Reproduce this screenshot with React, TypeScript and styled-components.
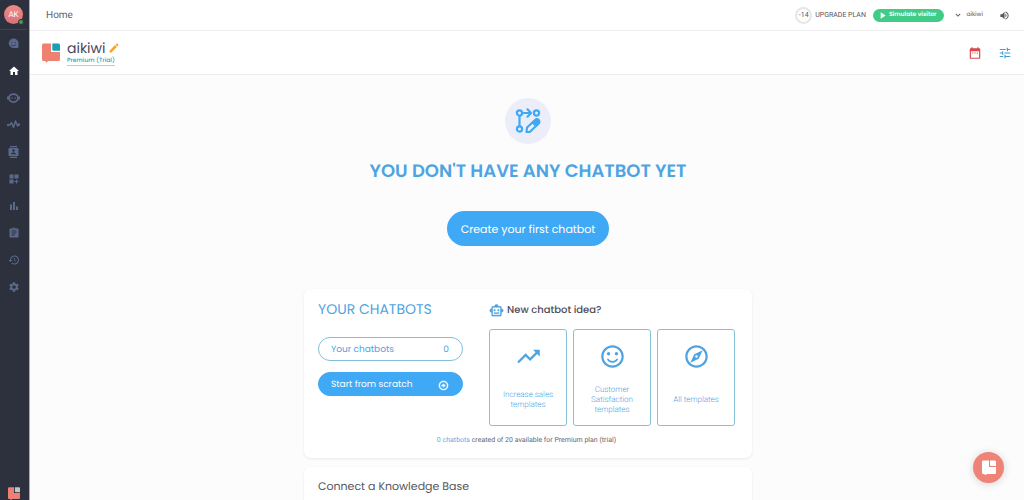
import React from "react";
import styled, { createGlobalStyle } from "styled-components";
import {
  MdAssignment,
  MdBarChart,
  MdDashboardCustomize,
  MdDateRange,
  MdEdit,
  MdHistory,
  MdHome,
  MdKeyboardArrowDown,
  MdOutlineArrowCircleRight,
  MdOutlineExplore,
  MdOutlineSentimentSatisfiedAlt,
  MdOutlineSmartToy,
  MdPlayArrow,
  MdSettings,
  MdTrendingUp,
  MdTune,
  MdVolumeUp,
} from "react-icons/md";

const display = `Poppins, Inter, "Liberation Sans", sans-serif`;
const body = `Roboto, "Liberation Sans", sans-serif`;
const blue = "#3fa9f5";
const textBlue = "#4ea4e2";

const GlobalStyle = createGlobalStyle`
  *, *::before, *::after { box-sizing: border-box; }
  body {
    margin: 0;
    background: #fcfcfc;
    color: #4a4a55;
    font-family: ${body};
    font-size: 8px;
    text-rendering: geometricPrecision;
  }
  button { font: inherit; color: inherit; background: none; border: 0; padding: 0; cursor: pointer; text-rendering: inherit; }
  a { color: inherit; text-decoration: none; }
  h1, h2, h3, p { margin: 0; font-weight: 400; }
  svg { display: block; flex: none; }
`;

const Shell = styled.div`
  display: grid;
  grid-template-columns: 29px 1fr;
  height: 100vh;
  overflow: hidden;
`;

const Sidebar = styled.nav`
  display: flex;
  flex-direction: column;
  align-items: center;
  justify-content: space-between;
  background: #2d303d;
  box-shadow: 1px 0 0 #a9abb0;
  padding-right: 2px;
  overflow: hidden;
  z-index: 1;
`;

const SideTop = styled.div`
  display: flex;
  flex-direction: column;
  align-items: center;
  width: 100%;
`;

const AvatarRow = styled.div`
  display: flex;
  justify-content: center;
  align-items: center;
  width: 100%;
  height: 30px;
  border-bottom: 1px solid #56384a;
`;

const Avatar = styled.button`
  position: relative;
  width: 19px;
  height: 19px;
  border-radius: 50%;
  background: linear-gradient(#ef8c84, #d9717a);
  color: #fff;
  font-size: 8px;
`;

const Online = styled.span`
  position: absolute;
  right: -1px;
  bottom: -1px;
  width: 6px;
  height: 6px;
  border: 1px solid #2d303d;
  border-radius: 50%;
  background: #43a047;
`;

const SideLink = styled.a<{ $active?: boolean }>`
  display: flex;
  align-items: center;
  justify-content: center;
  width: 100%;
  height: 27px;
  color: ${(p) => (p.$active ? "#fff" : "#5b6a8c")};
`;

const Main = styled.div`
  display: flex;
  flex-direction: column;
  min-width: 0;
  min-height: 0;
`;

const TopBar = styled.header`
  display: flex;
  align-items: center;
  justify-content: space-between;
  height: 31px;
  padding: 0 14px 0 17px;
  background: #fff;
  border-bottom: 1px solid #ededed;
  flex: none;
`;

const Crumb = styled.span`
  font-size: 10px;
  color: #62626a;
`;

const TopActions = styled.div`
  display: flex;
  align-items: center;
  font-size: 7px;
  color: #55555c;
`;

const Days = styled.span`
  display: flex;
  align-items: center;
  justify-content: center;
  width: 17px;
  height: 17px;
  border: 2px solid #e6e6e6;
  border-radius: 50%;
  margin-right: 3px;
`;

const Simulate = styled.button`
  display: flex;
  align-items: center;
  gap: 1px;
  height: 13px;
  padding: 0 7px 0 4px;
  margin: 0 9px 0 7px;
  border-radius: 7px;
  background: #40cc86;
  color: #fff;
  font-family: ${display};
  font-size: 6px;
  font-weight: 600;
`;

const Account = styled.button`
  display: flex;
  align-items: center;
  gap: 4px;
  margin-right: 16px;
  font-family: ${display};
  font-size: 6px;
`;

const BrandBar = styled.section`
  display: flex;
  align-items: center;
  gap: 7px;
  height: 44px;
  padding: 0 12px 0 13px;
  background: #fff;
  border-bottom: 1px solid #ebebeb;
  flex: none;
`;

const BrandText = styled.div`
  display: flex;
  flex-direction: column;
  align-items: flex-start;
  flex: 1;
`;

const BrandName = styled.h1`
  display: flex;
  align-items: center;
  gap: 2px;
  font-family: ${display};
  font-size: 14px;
  line-height: 17px;
  color: #4a4758;
`;

const IconButton = styled.button<{ $color: string }>`
  color: ${(p) => p.$color};
`;

const Plan = styled.a`
  font-family: ${display};
  font-size: 6px;
  font-weight: 500;
  line-height: 8px;
  color: #2f9fb6;
  border-bottom: 1px solid #a5d5de;
`;

const BrandTools = styled.div`
  display: flex;
  gap: 16px;
`;

const Content = styled.main`
  display: flex;
  flex-direction: column;
  align-items: center;
  flex: 1;
  min-height: 0;
  padding: 23px 0 20px 3px;
  overflow-y: auto;
  scrollbar-width: none;
`;

const HeroIcon = styled.div`
  display: flex;
  align-items: center;
  justify-content: center;
  width: 46px;
  height: 46px;
  border-radius: 50%;
  background: #ebeef8;
  flex: none;
`;

const HeroTitle = styled.h2`
  margin-top: 15px;
  font-family: ${display};
  font-size: 18px;
  font-weight: 600;
  line-height: 26px;
  color: ${textBlue};
`;

const HeroButton = styled.button`
  height: 35px;
  padding: 1px 14px 0;
  margin: 26px 0 43px;
  border-radius: 18px;
  background: ${blue};
  color: #fff;
  font-family: ${display};
  font-size: 11px;
  flex: none;
`;

const Card = styled.section`
  width: 100%;
  max-width: 448px;
  padding: 12px 17px 12px 14px;
  margin-bottom: 9px;
  border-radius: 7px;
  background: #fff;
  box-shadow: 0 1px 3px rgba(0, 0, 0, 0.08);
  flex: none;
`;

const Columns = styled.div`
  display: grid;
  grid-template-columns: 145px 1fr;
  column-gap: 26px;
`;

const BotsTitle = styled.h3`
  margin-bottom: 20px;
  font-family: ${display};
  font-size: 14px;
  line-height: 16px;
  color: ${textBlue};
`;

const PillButton = styled.button<{ $filled?: boolean }>`
  display: flex;
  align-items: center;
  justify-content: space-between;
  width: 100%;
  height: 24px;
  padding: 2px 13px 0 12px;
  margin-bottom: 11px;
  border: 1px solid ${(p) => (p.$filled ? blue : "#7fbfdc")};
  border-radius: 12px;
  background: ${(p) => (p.$filled ? blue : "#fff")};
  color: ${(p) => (p.$filled ? "#fff" : textBlue)};
  font-family: ${display};
  font-size: 9px;

  path:not([fill="none"]) {
    stroke-width: 1;
  }
`;

const IdeaTitle = styled.h3`
  display: flex;
  align-items: center;
  gap: 3px;
  margin-bottom: 10px;
  font-family: ${display};
  font-size: 10px;
  font-weight: 500;
  line-height: 18px;
  color: #4d4d59;

  svg {
    color: ${textBlue};
  }

  path:not([fill="none"]) {
    stroke-width: 0.3;
  }
`;

const Templates = styled.div`
  display: grid;
  grid-template-columns: repeat(3, 1fr);
  gap: 6px;
`;

const Template = styled.button`
  display: grid;
  grid-template-rows: 27px 1fr;
  justify-items: center;
  align-items: center;
  row-gap: 14px;
  height: 97px;
  padding: 13px 10px 10px;
  border: 1px solid #86c3d8;
  border-radius: 3px;
  color: ${textBlue};
  font-size: 8px;
  font-weight: 300;
  line-height: 10px;
`;

const Usage = styled.p`
  margin-top: 8px;
  text-align: center;
  font-size: 7px;
  line-height: 12px;
  color: #66666c;

  a {
    color: #64aadf;
  }
`;

const BaseTitle = styled.h3`
  padding-bottom: 60px;
  font-family: ${display};
  font-size: 11px;
  line-height: 14px;
  color: #55555e;
`;

const ChatLauncher = styled.button`
  position: fixed;
  right: 20px;
  bottom: 17px;
  display: flex;
  align-items: center;
  justify-content: center;
  width: 31px;
  height: 31px;
  border-radius: 50%;
  background: #ee8377;
  box-shadow: 0 1px 8px rgba(0, 0, 0, 0.16);
`;

type LogoProps = { width: number; main: string; corner: string };

const Logo = ({ width, main, corner }: LogoProps) => (
  <svg width={width} height={(width * 20) / 18} viewBox="0 0 18 20" aria-hidden="true">
    <path d="M1.500 .5H9v8.500h9V16.500a1.500 1.500 0 0 1-1.500 1.500H6L4.500 19.800 3 18H1.500A1.500 1.500 0 0 1 0 16.500V2A1.500 1.500 0 0 1 1.500 .5Z" fill={main} />
    <path d="M10.300 .5h6.200A1.500 1.500 0 0 1 18 2v5.700h-6.200a1.500 1.500 0 0 1-1.500-1.500Z" fill={corner} />
  </svg>
);

const ChatFace = () => (
  <svg width="11" height="11" viewBox="0 0 22 22" aria-hidden="true">
    <path d="M11 1a10 10 0 0 1 10 10v6.500q0 2.500-2.500 2.500H11A9.500 9.500 0 0 1 11 1Z" fill="currentColor" />
    <circle cx="7.500" cy="9" r="1.200" fill="#2d303d" />
    <circle cx="14.500" cy="9" r="1.200" fill="#2d303d" />
    <path d="M6 13.500q5 4 10 0" fill="none" stroke="#2d303d" strokeWidth="1.500" />
  </svg>
);

const BotHead = () => (
  <svg width="13" height="12" viewBox="0 0 26 24" fill="none" stroke="currentColor" aria-hidden="true">
    <ellipse cx="13" cy="12" rx="9" ry="8" strokeWidth="3.500" />
    <path d="M8.500 12h2.500M15 12h2.500" strokeWidth="3" />
    <path d="M1.800 9v6M24.200 9v6" strokeWidth="3.500" />
  </svg>
);

const Pulse = () => (
  <svg width="13" height="9" viewBox="0 0 26 18" fill="none" stroke="currentColor" strokeWidth="2.800" strokeLinejoin="round" aria-hidden="true">
    <path d="M2 10h4l3-5 4 10 4-13 4 10 2-3h2" />
    <circle cx="2" cy="10" r="1" />
    <circle cx="24" cy="9" r="1" />
  </svg>
);

const ContactBook = () => (
  <svg width="11" height="12" viewBox="0 0 22 24" aria-hidden="true">
    <path d="M4 0h14v2H4ZM4 22h14v2H4Z" fill="currentColor" />
    <rect x="1" y="3.500" width="20" height="17" rx="3" fill="currentColor" />
    <circle cx="11" cy="9" r="2.500" fill="#2d303d" />
    <path d="M6 16.500c0-4.500 10-4.500 10 0Z" fill="#2d303d" />
  </svg>
);

const FlowEdit = () => (
  <svg width="26" height="26" viewBox="0 0 26 26" fill="none" stroke={blue} strokeWidth="2.200" strokeLinecap="round" strokeLinejoin="round" aria-hidden="true">
    <circle cx="4.500" cy="5" r="2.600" />
    <circle cx="4.500" cy="21" r="2.600" />
    <circle cx="21.500" cy="5" r="2.600" />
    <path d="M4.500 8v10M7.500 5H15M12.500 1.300 16 5l-3.500 3.700" />
    <path d="m11.500 24 .5-4.500 8-7.200a2.200 2.200 0 0 1 3.600 3.200l-8.600 8.300Z" />
    <path d="m17.500 14.500 2.800-2.500a2.200 2.200 0 0 1 3.300 3.300l-2.600 2.500Z" fill={blue} />
  </svg>
);

const sideItems = [
  { label: "Conversations", icon: <ChatFace /> },
  { label: "Home", icon: <MdHome size={12} />, active: true },
  { label: "Chatbots", icon: <BotHead /> },
  { label: "Activity", icon: <Pulse /> },
  { label: "Contacts", icon: <ContactBook /> },
  { label: "Apps", icon: <MdDashboardCustomize size={12} /> },
  { label: "Analytics", icon: <MdBarChart size={12} /> },
  { label: "Tasks", icon: <MdAssignment size={12} /> },
  { label: "History", icon: <MdHistory size={12} /> },
  { label: "Settings", icon: <MdSettings size={12} /> },
];

const templates = [
  { label: "Increase sales templates", icon: <MdTrendingUp size={27} /> },
  { label: "Customer Satisfaction templates", icon: <MdOutlineSentimentSatisfiedAlt size={27} /> },
  { label: "All templates", icon: <MdOutlineExplore size={27} /> },
];

export default function App() {
  return (
    <>
      <GlobalStyle />
      <Shell>
        <Sidebar aria-label="Main">
          <SideTop>
            <AvatarRow>
              <Avatar>
                AK
                <Online />
              </Avatar>
            </AvatarRow>
            {sideItems.map((item) => (
              <SideLink key={item.label} href="#" aria-label={item.label} $active={item.active}>
                {item.icon}
              </SideLink>
            ))}
          </SideTop>
          <Logo width={12} main="#ee7f73" corner="#c9c4c0" />
        </Sidebar>

        <Main>
          <TopBar>
            <Crumb>Home</Crumb>
            <TopActions>
              <Days>-14</Days>
              <a href="#">UPGRADE PLAN</a>
              <Simulate>
                <MdPlayArrow size={11} />
                Simulate visitor
              </Simulate>
              <Account>
                <MdKeyboardArrowDown size={10} />
                aikiwi
              </Account>
              <IconButton $color="#55555c" aria-label="Sound">
                <MdVolumeUp size={11} />
              </IconButton>
            </TopActions>
          </TopBar>

          <BrandBar>
            <Logo width={18} main="#ee8172" corner="#159fb8" />
            <BrandText>
              <BrandName>
                aikiwi
                <IconButton $color="#f5a52f" aria-label="Rename">
                  <MdEdit size={12} />
                </IconButton>
              </BrandName>
              <Plan href="#">Premium (Trial)</Plan>
            </BrandText>
            <BrandTools>
              <IconButton $color="#d9484d" aria-label="Calendar">
                <MdDateRange size={14} />
              </IconButton>
              <IconButton $color="#3f9fd0" aria-label="Filters">
                <MdTune size={14} />
              </IconButton>
            </BrandTools>
          </BrandBar>

          <Content>
            <HeroIcon>
              <FlowEdit />
            </HeroIcon>
            <HeroTitle>YOU DON'T HAVE ANY CHATBOT YET</HeroTitle>
            <HeroButton>Create your first chatbot</HeroButton>

            <Card>
              <Columns>
                <div>
                  <BotsTitle>YOUR CHATBOTS</BotsTitle>
                  <PillButton>
                    <span>Your chatbots</span>
                    <span>0</span>
                  </PillButton>
                  <PillButton $filled>
                    <span>Start from scratch</span>
                    <MdOutlineArrowCircleRight size={11} />
                  </PillButton>
                </div>
                <div>
                  <IdeaTitle>
                    <MdOutlineSmartToy size={15} />
                    New chatbot idea?
                  </IdeaTitle>
                  <Templates>
                    {templates.map((t) => (
                      <Template key={t.label}>
                        {t.icon}
                        <span>{t.label}</span>
                      </Template>
                    ))}
                  </Templates>
                </div>
              </Columns>
              <Usage>
                <a href="#">0 chatbots</a> created of 20 available for Premium plan (trial)
              </Usage>
            </Card>

            <Card>
              <BaseTitle>Connect a Knowledge Base</BaseTitle>
            </Card>
          </Content>
        </Main>
      </Shell>
      <ChatLauncher aria-label="Open chat">
        <Logo width={14} main="#fff" corner="#fff" />
      </ChatLauncher>
    </>
  );
}
